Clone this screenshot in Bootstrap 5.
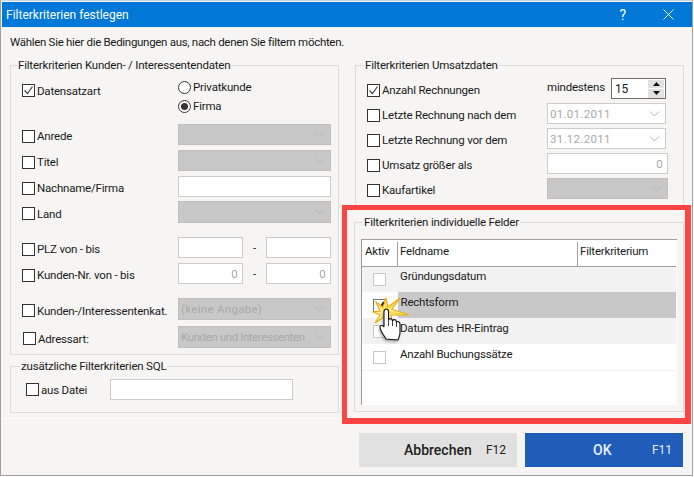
<!DOCTYPE html>
<html lang="de"><head><meta charset="utf-8"><title>Filterkriterien festlegen</title>
<link href="https://cdn.jsdelivr.net/npm/bootstrap@5.3.0/dist/css/bootstrap.min.css" rel="stylesheet">
<style>
html,body{height:477px;overflow:hidden;background:#fff}
body{font-family:"Roboto","Liberation Sans",sans-serif;font-size:11.5px;letter-spacing:-.2px;line-height:16px;color:#1a1a1a;width:694px}
.dlg{width:693px;height:476px;border:1px solid #a0a0a0;border-top:1px solid #c4d4e4;background:#f6f5f3;padding-top:1px;position:relative}
.ttl{height:25px;background:#0078d7;color:#fff;margin-left:1px;font-size:12px;letter-spacing:0}
.ttl-t{padding-left:4px}
.ttl-q{margin-right:37px;font-size:14px}
.ttl-x{margin-right:18px}
.intro{height:30px;padding-left:9px;letter-spacing:-.3px}
.cols{height:367px}
.lft{width:341px;height:362px;padding-left:9px;border-bottom:1px solid #fcfcfb}
.rgt{width:349px}
.grp{border:1px solid #dcdcda;padding:5px 0 0;margin:0}
.grp legend{float:none;width:auto;font-size:11.5px;line-height:16px;margin:0 0 0 6px;padding:0 1px}
.g1{width:329px;height:298px}
.g2{width:329px;height:55px;margin-top:3px}
.g2 legend{margin-left:9px}
.g3{width:329px;height:148px;margin-left:13px;border-bottom:0}
.g3 legend,.g4 legend{margin-left:8px}
.rw{height:21px;align-items:center;margin-left:11px}
.rw.tall{height:38px;align-items:flex-start}
.rw.wide{height:22px}
.lbl{width:156px;padding-top:3px}
.tall .lbl{height:21px;padding-top:4px}
.ck.ck{width:13px;height:13px;border:1px solid #333;background-color:#fff;flex:none;margin:0 2px 0 0;border-radius:0;box-shadow:none}
.ck.ck.ck:checked{background-color:#fff;border-color:#333;--bs-form-check-bg-image:url("data:image/svg+xml,%3Csvg xmlns='http://www.w3.org/2000/svg' viewBox='0 0 11 11'%3E%3Cpath d='M1.5 5.5l3 3 5-7' fill='none' stroke='%23444' stroke-width='1.2'/%3E%3C/svg%3E")}
.rad.rad{width:13px;height:13px;border:1px solid #333;border-radius:50%;flex:none;margin:0 2px 0 0;background-color:#fff;box-shadow:none}
.rad.rad.rad:checked{background-color:#fff;border-color:#333;--bs-form-check-bg-image:url("data:image/svg+xml,%3Csvg xmlns='http://www.w3.org/2000/svg' viewBox='0 0 11 11'%3E%3Ccircle cx='5.5' cy='5.5' r='3.5' fill='%23333'/%3E%3C/svg%3E")}
.fld{height:100%;width:153px;border:1px solid #ccc;border-radius:0;background:#fff;font-size:11.5px;letter-spacing:.3px;line-height:16px;color:#a8a8a8;padding:0 4px;box-shadow:none;min-height:0}
.fld:disabled{opacity:1;color:#a8a8a8;background-color:#fff}
select.fld{appearance:none;padding:0 14px 0 2px;background:#fff right 5px center/11px 6px no-repeat url("data:image/svg+xml,%3Csvg xmlns='http://www.w3.org/2000/svg' viewBox='0 0 11 6'%3E%3Cpath d='M1 .5l4.5 4.5L10 .5' fill='none' stroke='%23b4b4b4'/%3E%3C/svg%3E")}
select.fld.grey,select.fld.grey:disabled{background-color:#c8c8c8;border-color:#bfbfbf}
select.fld.wht:disabled{background-color:#fff}
select.fld.tight{letter-spacing:-.4px}
.num{text-align:right}
.half{width:65px}
.w-a{width:119px}.w-b{width:121px}.w-c{width:183px}
.dash{width:23px;text-align:center}
.rrow{height:19px;align-items:center}
.g1 .rcol{margin-top:-.5px}
.m4{margin-top:4px}.m5{margin-top:5px}.m6{margin-top:6px}.m8{margin-top:8px}.m14{margin-top:14px}
.shift.shift{margin-left:1px}
.rl{width:180px;padding-top:3px}
.min{width:64px;padding-bottom:4px}
.sqlb{width:84px}
.sp{width:55px;height:21px;border:1px solid #6e6e6e;background:#fff;padding:0 1px 0 3px;align-items:center;justify-content:space-between;font-size:12px}
.spb{width:16px;display:flex;flex-direction:column;gap:1px}
.spb span{display:flex;height:8.5px;background:#e1e1e1;align-items:center;justify-content:center}
.frame{width:349px;height:219px;border:solid #ff4444;border-width:5px 6px 6px 5px}
.g4{width:330px;height:198px;margin:4px 0 0 7px;padding:0}
.tbx{width:316px;height:166px;margin:9px 0 0 6px;background:#fff;border-left:1px solid #999;border-top:1px solid #a0a0a0}
.tbl{width:314px;margin:0;table-layout:fixed;--bs-table-bg:transparent;font-size:11.5px;line-height:16px;color:#1a1a1a}
.c-a{width:35px}.c-b{width:180px}
.tbl th{font-weight:400;height:26px;padding:0 0 3px 3px;border-bottom:1px solid #a0a0a0;vertical-align:middle;white-space:nowrap}
.tbl th+th{background:linear-gradient(#a0a0a0,#a0a0a0) 0 2px/1px 100% no-repeat}
.tbl td{height:26px;padding:0 0 6px 3px;border-bottom:0;vertical-align:middle;white-space:nowrap}
.tbl tr.alt td{background:#f2f2f2}
.tbl tr.sel td+td{background:#c8c8c8}
.tbl tr.sel td:nth-child(2){border-left:1px solid #fff}
.tbl tr.last td{border-bottom:1px solid #f0f0f0}
.tbl td.cc{padding:1px 0 0 11px}
.tbl th.cc{padding-left:3px}
.ck2{width:13px;height:13px;border:1px solid #c8c8c8;background:#fff;display:block}
.ck2.on{border-color:#777}
.foot{padding-top:9px;padding-right:9px;gap:8px}
.bt{width:158px;height:34px;border:0;border-radius:0;padding:0;display:flex;align-items:center;letter-spacing:0}
.bt1,.bt1:hover{background:#e1e1e1;color:#222}
.bt2,.bt2:hover{background:#205db8;color:#e8eef8}
.bt-l{font-size:14px;font-weight:500}
.bt1 .bt-l{margin-left:45px}
.bt2 .bt-l{margin-left:68px}
.bt-k{font-size:12px;margin-left:auto;margin-right:11px}
.hand{position:absolute;left:368px;top:292px;width:44px;height:54px}
</style></head><body>
<div class="dlg">
<div class="ttl d-flex align-items-center justify-content-between"><span class="ttl-t">Filterkriterien festlegen</span>
<div class="d-flex align-items-center"><span class="ttl-q">?</span>
<svg class="ttl-x" width="11" height="11" viewBox="0 0 11 11"><path d="M.5.5l10 10M10.5.5l-10 10" stroke="#fff" fill="none"/></svg></div></div>
<div class="intro d-flex align-items-center">Wählen Sie hier die Bedingungen aus, nach denen Sie filtern möchten.</div>
<div class="cols d-flex">
<div class="lft">
<fieldset class="grp g1"><legend>Filterkriterien Kunden- / Interessentendaten</legend>
 <div class="d-flex rw tall"><div class="d-flex lbl align-items-center"><input type="checkbox" class="form-check-input ck" checked>Datensatzart</div>
  <div class="rcol"><div class="d-flex rrow"><input type="radio" name="a" class="form-check-input rad">Privatkunde</div><div class="d-flex rrow"><input type="radio" name="a" class="form-check-input rad" checked>Firma</div></div></div>
 <div class="d-flex rw m8"><div class="d-flex lbl align-items-center"><input type="checkbox" class="form-check-input ck">Anrede</div><select class="form-select fld grey" disabled></select></div>
 <div class="d-flex rw m5"><div class="d-flex lbl align-items-center"><input type="checkbox" class="form-check-input ck">Titel</div><select class="form-select fld grey" disabled></select></div>
 <div class="d-flex rw m5"><div class="d-flex lbl align-items-center"><input type="checkbox" class="form-check-input ck">Nachname/Firma</div><input class="form-control fld" disabled></div>
 <div class="d-flex rw wide m4"><div class="d-flex lbl align-items-center"><input type="checkbox" class="form-check-input ck">Land</div><select class="form-select fld grey" disabled></select></div>
 <div class="d-flex rw m14"><div class="d-flex lbl align-items-center"><input type="checkbox" class="form-check-input ck">PLZ von - bis</div><input class="form-control fld half" disabled><span class="dash">-</span><input class="form-control fld half" disabled></div>
 <div class="d-flex rw m5"><div class="d-flex lbl align-items-center"><input type="checkbox" class="form-check-input ck">Kunden-Nr. von - bis</div><input class="form-control fld half num" value="0" disabled><span class="dash">-</span><input class="form-control fld half num" value="0" disabled></div>
 <div class="d-flex rw wide m14"><div class="d-flex lbl align-items-center"><input type="checkbox" class="form-check-input ck">Kunden-/Interessentenkat.</div><select class="form-select fld grey" disabled><option>(keine Angabe)</option></select></div>
 <div class="d-flex rw wide m6"><div class="d-flex lbl align-items-center"><input type="checkbox" class="form-check-input ck shift">Adressart:</div><select class="form-select fld grey tight" disabled><option>Kunden und Interessenten</option></select></div>
</fieldset>
<fieldset class="grp g2"><legend>zusätzliche Filterkriterien SQL</legend>
 <div class="d-flex rw"><div class="d-flex align-items-center ms-1 sqlb"><input type="checkbox" class="form-check-input ck">aus Datei</div><input class="form-control fld w-c" disabled></div>
</fieldset>
</div>
<div class="rgt">
<fieldset class="grp g3"><legend>Filterkriterien Umsatzdaten</legend>
 <div class="d-flex rw"><div class="d-flex rl align-items-center"><input type="checkbox" class="form-check-input ck" checked>Anzahl Rechnungen</div><span class="min">mindestens</span><div class="d-flex sp"><span>15</span><div class="spb"><span><svg width="7" height="4"><path d="M3.5 0L7 4H0z" fill="#111"/></svg></span><span><svg width="7" height="4"><path d="M0 0h7L3.5 4z" fill="#111"/></svg></span></div></div></div>
 <div class="d-flex rw m4"><div class="d-flex rl align-items-center"><input type="checkbox" class="form-check-input ck">Letzte Rechnung nach dem</div><select class="form-select fld wht w-a" disabled><option>01.01.2011</option></select></div>
 <div class="d-flex rw m4"><div class="d-flex rl align-items-center"><input type="checkbox" class="form-check-input ck">Letzte Rechnung vor dem</div><select class="form-select fld wht w-a" disabled><option>31.12.2011</option></select></div>
 <div class="d-flex rw m4"><div class="d-flex rl align-items-center"><input type="checkbox" class="form-check-input ck">Umsatz größer als</div><input class="form-control fld num w-b" value="0" disabled></div>
 <div class="d-flex rw m4"><div class="d-flex rl align-items-center"><input type="checkbox" class="form-check-input ck">Kaufartikel</div><select class="form-select fld grey w-b" disabled></select></div>
</fieldset>
<div class="frame">
<fieldset class="grp g4"><legend>Filterkriterien individuelle Felder</legend>
<div class="tbx">
<table class="table tbl"><colgroup><col class="c-a"><col class="c-b"><col></colgroup>
<thead><tr><th class="cc">Aktiv</th><th>Feldname</th><th>Filterkriterium</th></tr></thead>
<tbody>
<tr class="alt"><td class="cc"><span class="ck2"></span></td><td>Gründungsdatum</td><td></td></tr>
<tr class="sel"><td class="cc"><span class="ck2 on"></span></td><td>Rechtsform</td><td></td></tr>
<tr class="alt"><td class="cc"><span class="ck2"></span></td><td>Datum des HR-Eintrag</td><td></td></tr>
<tr class="last"><td class="cc"><span class="ck2"></span></td><td>Anzahl Buchungssätze</td><td></td></tr>
</tbody></table>
</div>
</fieldset>
</div>
</div>
</div>
<div class="foot d-flex justify-content-end">
<button class="btn bt bt1"><span class="bt-l">Abbrechen</span><span class="bt-k">F12</span></button>
<button class="btn bt bt2"><span class="bt-l">OK</span><span class="bt-k">F11</span></button>
</div>
<svg class="hand" viewBox="0 0 44 54">
<defs><filter id="b" x="-30%" y="-30%" width="160%" height="160%"><feGaussianBlur stdDeviation="1.5"/></filter></defs>
<path d="M9 11l2.500 3.500L15 9" fill="none" stroke="#111" stroke-width="2.200"/>
<path d="M17 5l2 9L31 5l-8 11 2 1 15 5-18 0 1 7-8-5-9 6 5-8-7-3 7-1-4-9 7 5z" fill="#ffe98a" stroke="#e8ae0c" stroke-width="1.100"/>
<path d="M16 18L8 10M17 18V7M18 18L29 7M19 19l18 3" stroke="#f5c518" stroke-width=".8" fill="none"/>
<path d="M17 46C15 42 11 38 11 34c0-2 3-2 4 0V19c0-4 4.500-4 4.500 0v8c.5-2 3.500-2 4 1 .5-2 3.500-2 4 1 1-1 3.500-.5 3.500 2v9c0 3-1.500 5-2 7z" fill="#555" opacity=".55" filter="url(#b)" transform="translate(-1 2)"/>
<path d="M17 46C15 42 11 38 11 34c0-2 3-2 4 0V19c0-4 4.500-4 4.500 0v8c.5-2 3.500-2 4 1 .5-2 3.500-2 4 1 1-1 3.500-.5 3.500 2v9c0 3-1.500 5-2 7z" fill="#fff" stroke="#111" stroke-width="1.100"/>
<path d="M19.500 27v6M23.500 28v5M27.500 29v5" stroke="#111" fill="none" stroke-width=".8"/>
</svg>
</div>
<script src="https://cdn.jsdelivr.net/npm/bootstrap@5.3.0/dist/js/bootstrap.bundle.min.js"></script>
</body></html>
